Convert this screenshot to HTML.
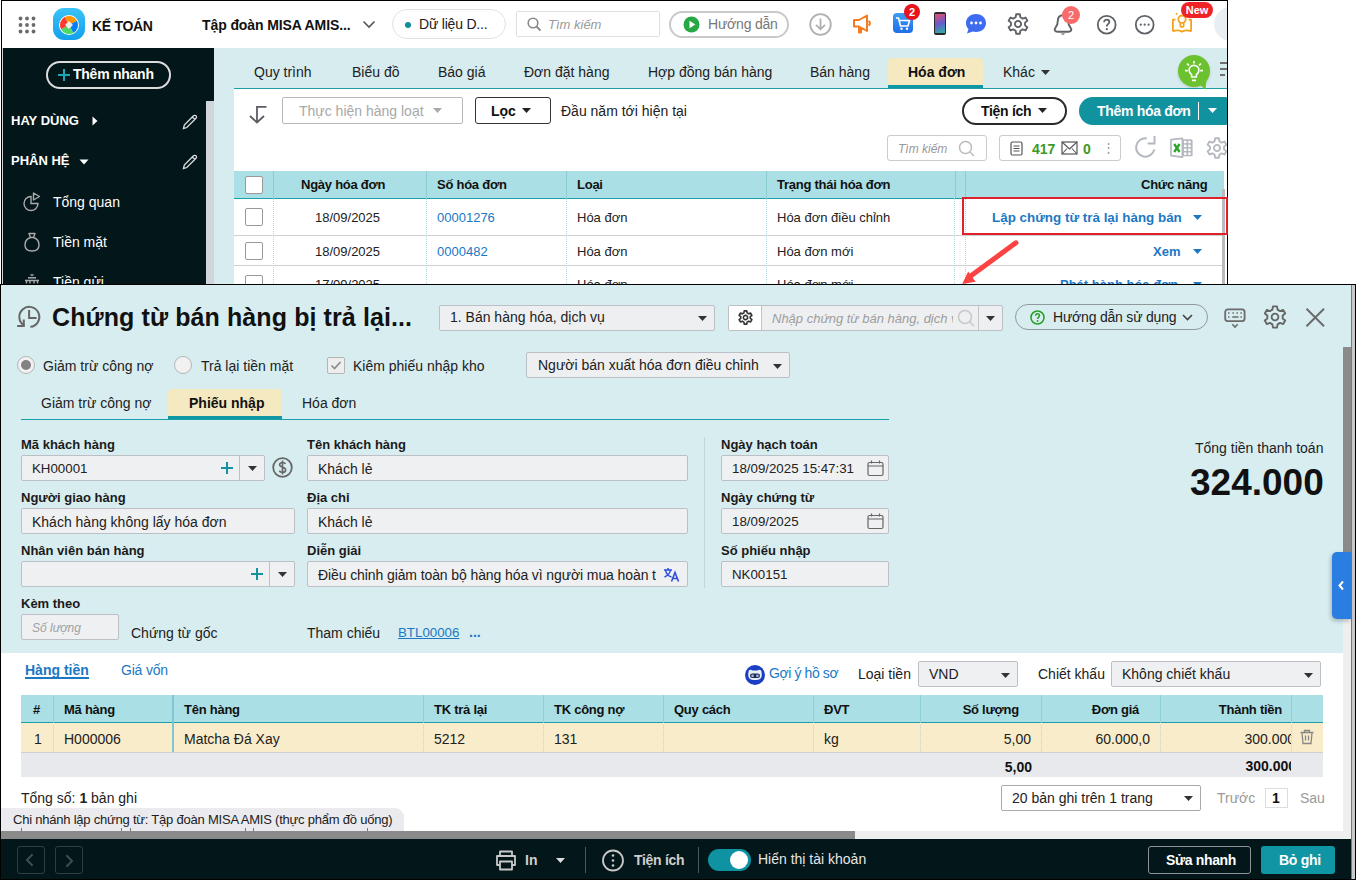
<!DOCTYPE html>
<html><head><meta charset="utf-8">
<style>
*{box-sizing:border-box;margin:0;padding:0}
html,body{width:1356px;height:880px;overflow:hidden;background:#fff;font-family:"Liberation Sans",sans-serif;color:#212121}
.a{position:absolute}
.t{position:absolute;white-space:nowrap;line-height:1}
.b{font-weight:bold}
svg{position:absolute;overflow:visible}
</style></head><body>
<!-- ========== BACKGROUND APP ========== -->
<div class="a" style="left:1px;top:0;width:1227px;height:285px;background:#000"></div>
<div class="a" style="left:1px;top:1px;width:1226px;height:283px;background:#fff;overflow:hidden" id="bg">
  <div class="a" style="left:0;top:0;width:1px;height:283px;background:#000;z-index:5"></div>
  <!-- top bar -->
  <div class="a" style="left:0;top:0;width:1225px;height:47px;background:#fff"></div>
  <!-- grid dots -->
  <svg style="left:17px;top:15px" width="18" height="18" viewBox="0 0 18 18" fill="#6b6b6b">
    <circle cx="2.5" cy="2.5" r="1.9"/><circle cx="9" cy="2.5" r="1.9"/><circle cx="15.5" cy="2.5" r="1.9"/>
    <circle cx="2.5" cy="9" r="1.9"/><circle cx="9" cy="9" r="1.9"/><circle cx="15.5" cy="9" r="1.9"/>
    <circle cx="2.5" cy="15.5" r="1.9"/><circle cx="9" cy="15.5" r="1.9"/><circle cx="15.5" cy="15.5" r="1.9"/>
  </svg>
  <!-- logo -->
  <div class="a" style="left:52px;top:7px;width:32px;height:32px;border-radius:11px;background:linear-gradient(180deg,#3ac3f7,#12a0ec)"></div>
  <svg style="left:57px;top:13px" width="22" height="22" viewBox="0 0 22 22">
    <circle cx="11" cy="11" r="10" fill="#fff"/>
    <g transform="rotate(17 11 11)"><path d="M11 11 L4.6 4.6 A9.05 9.05 0 0 1 17.4 4.6 Z" fill="#ff9500"/>
    <path d="M11 11 L17.4 4.6 A9.05 9.05 0 0 1 17.4 17.4 Z" fill="#0a7cf5"/>
    <path d="M11 11 L17.4 17.4 A9.05 9.05 0 0 1 4.6 17.4 Z" fill="#4cd964"/>
    <path d="M11 11 L4.6 17.4 A9.05 9.05 0 0 1 4.6 4.6 Z" fill="#ff3b30"/></g>
    <rect x="8.6" y="8.6" width="4.8" height="4.8" transform="rotate(45 11 11)" fill="#e9ecef" stroke="#fff" stroke-width="0.8"/>
  </svg>
  <div class="t b" style="left:91px;top:18px;font-size:14px;color:#111;letter-spacing:-0.3px">KẾ TOÁN</div>
  <div class="t b" style="left:201px;top:17px;font-size:14px;color:#111;letter-spacing:-0.1px">Tập đoàn MISA AMIS...</div>
  <svg style="left:361px;top:19px" width="14" height="9" viewBox="0 0 14 9"><path d="M1.5 1.5 L7 7 L12.5 1.5" stroke="#555" stroke-width="1.6" fill="none"/></svg>
  <div class="a" style="left:391px;top:8px;width:114px;height:30px;border:1px solid #e2e2e2;border-radius:15px"></div>
  <div class="a" style="left:404px;top:21px;width:6px;height:6px;border-radius:50%;background:#0e8f9c"></div>
  <div class="t" style="left:418px;top:16px;font-size:14px;color:#212121;letter-spacing:-0.2px">Dữ liệu D...</div>
  <div class="a" style="left:515px;top:10px;width:144px;height:26px;border:1px solid #e0e0e0;border-radius:2px"></div>
  <svg style="left:526px;top:16px" width="15" height="15" viewBox="0 0 15 15"><circle cx="6" cy="6" r="4.8" stroke="#888" stroke-width="1.6" fill="none"/><path d="M9.5 9.5 L13.5 13.5" stroke="#888" stroke-width="1.8"/></svg>
  <div class="t" style="left:547px;top:17px;font-size:13px;color:#9a9a9a;font-style:italic">Tìm kiếm</div>
  <div class="a" style="left:668px;top:10px;width:120px;height:27px;border:2px solid #c9c9c9;border-radius:14px"></div>
  <svg style="left:682px;top:15px" width="17" height="17" viewBox="0 0 17 17"><circle cx="8.5" cy="8.5" r="8" fill="#28a745"/><path d="M6.5 4.8 L12.3 8.5 L6.5 12.2 Z" fill="#fff"/></svg>
  <div class="t" style="left:707px;top:16px;font-size:14px;color:#777;letter-spacing:-0.2px">Hướng dẫn</div>
  <!-- icons -->
  <svg style="left:808px;top:12px" width="23" height="23" viewBox="0 0 23 23"><circle cx="11.5" cy="11.5" r="10.3" stroke="#b0b0b0" stroke-width="1.8" fill="none"/><path d="M11.5 5.5 V16 M7 11.8 L11.5 16.3 L16 11.8" stroke="#b0b0b0" stroke-width="1.8" fill="none"/></svg>
  <svg style="left:851px;top:13px" width="22" height="20" viewBox="0 0 22 20"><path d="M2 6 H7 L15 1.5 V17 L7 12.5 H2 Z M7 12.5 V18.5 H9 V13.5 M16.5 7 A2.5 2.5 0 0 1 16.5 11.5" stroke="#f47b20" stroke-width="2" fill="none" stroke-linejoin="round"/></svg>
  <div class="a" style="left:892px;top:12px;width:20px;height:20px;border-radius:4px;background:linear-gradient(180deg,#3f9cf5,#1f6fe8)"></div>
  <svg style="left:894px;top:15px" width="16" height="15" viewBox="0 0 16 15"><path d="M1 2 H3.5 L5.5 10 H13 L14.5 4.5 H4.5" stroke="#fff" stroke-width="1.6" fill="none"/><circle cx="6.5" cy="12.8" r="1.2" fill="#fff"/><circle cx="12" cy="12.8" r="1.2" fill="#fff"/></svg>
  <div class="a" style="left:903px;top:3px;width:16px;height:16px;border-radius:50%;background:#e8131b;color:#fff;font-size:11px;font-weight:bold;text-align:center;line-height:16px">2</div>
  <div class="a" style="left:933px;top:11px;width:12px;height:23px;border-radius:2px;background:#2a2a2a"></div>
  <div class="a" style="left:934px;top:13px;width:10px;height:19px;background:linear-gradient(160deg,#e84f6a,#6a5acd 50%,#2bb5a0)"></div>
  <svg style="left:964px;top:12px" width="22" height="21" viewBox="0 0 22 21"><path d="M11 1 C17 1 21 5 21 10 C21 15 17 19 11 19 C9.8 19 8.7 18.8 7.7 18.5 L2 20.5 L3.5 16 C1.8 14.5 1 12.4 1 10 C1 5 5 1 11 1 Z" fill="#3d6cf0"/><circle cx="6.5" cy="10" r="1.4" fill="#fff"/><circle cx="11" cy="10" r="1.4" fill="#fff"/><circle cx="15.5" cy="10" r="1.4" fill="#fff"/></svg>
  <svg style="left:1006px;top:12px" width="22" height="22" viewBox="0 0 24 24"><path d="M9.43 4.63 L9.98 1.39 L14.02 1.39 L14.57 4.63 L17.10 6.10 L20.18 4.94 L22.20 8.45 L19.66 10.54 L19.66 13.46 L22.20 15.55 L20.18 19.06 L17.10 17.90 L14.57 19.37 L14.02 22.61 L9.98 22.61 L9.43 19.37 L6.90 17.90 L3.82 19.06 L1.80 15.55 L4.34 13.46 L4.34 10.54 L1.80 8.45 L3.82 4.94 L6.90 6.10 Z M15.40 12.00 A3.40 3.40 0 1 0 8.60 12.00 A3.40 3.40 0 1 0 15.40 12.00" stroke="#5f6368" stroke-width="2.0" fill="none" stroke-linejoin="round"/></svg>
  <svg style="left:1051px;top:12px" width="22" height="23" viewBox="0 0 22 23"><path d="M11 2.2 C7.6 2.2 5.8 4.6 5.8 8 C5.8 11.3 5.3 12.7 3.4 14.9 C1.8 16.7 2.9 18.7 5.6 18.7 H16.4 C19.1 18.7 20.2 16.7 18.6 14.9 C16.7 12.7 16.2 11.3 16.2 8 C16.2 4.6 14.4 2.2 11 2.2 Z" stroke="#5f6368" stroke-width="1.9" fill="none"/><path d="M8.6 20.6 H13.4 L11 22 Z" fill="#5f6368"/></svg>
  <div class="a" style="left:1061px;top:5px;width:18px;height:18px;border-radius:50%;background:#f76b6b;color:#fff;font-size:11px;text-align:center;line-height:18px">2</div>
  <svg style="left:1095px;top:13px" width="21" height="21" viewBox="0 0 21 21"><circle cx="10.7" cy="10.7" r="8.9" stroke="#5f6368" stroke-width="1.8" fill="none"/><path d="M8 8.2 C8 6.6 9.2 5.6 10.7 5.6 C12.2 5.6 13.4 6.6 13.4 8 C13.4 9.8 10.8 10 10.8 12.5" stroke="#5f6368" stroke-width="1.8" fill="none"/><circle cx="10.8" cy="15.2" r="1.1" fill="#5f6368"/></svg>
  <svg style="left:1133px;top:13px" width="21" height="21" viewBox="0 0 21 21"><circle cx="10.7" cy="10.7" r="8.9" stroke="#5f6368" stroke-width="1.8" fill="none"/><circle cx="6.8" cy="10.7" r="1.1" fill="#5f6368"/><circle cx="10.7" cy="10.7" r="1.1" fill="#5f6368"/><circle cx="14.6" cy="10.7" r="1.1" fill="#5f6368"/></svg>
  <svg style="left:1170px;top:11px" width="24" height="22" viewBox="0 0 24 22"><path d="M4.5 7.6 H1.9 V19.6 M17.5 7.6 H20.1 V19.6 M1.9 19.6 C4.5 18 8 18 11 19.6 C14 18 17.5 18 20.1 19.6" stroke="#f5a31f" stroke-width="1.8" fill="none" stroke-linejoin="round"/><circle cx="11" cy="7.2" r="3.7" stroke="#f5a31f" stroke-width="1.8" fill="none"/><path d="M9.3 10.5 V13.2 A1.7 1.7 0 0 0 12.7 13.2 V10.5" stroke="#f5a31f" stroke-width="1.7" fill="none"/><circle cx="5.6" cy="1.8" r="1" fill="#f5a31f"/></svg>
  <div class="a" style="left:1180px;top:1px;width:32px;height:16px;border-radius:8px;background:#ef2226;color:#fff;font-size:11px;font-weight:bold;text-align:center;line-height:16px">New</div>
  <div class="a" style="left:1213px;top:6px;width:34px;height:34px;border-radius:50%;background:#e9eef3"></div>

  <!-- sidebar -->
  <div class="a" style="left:2px;top:47px;width:211px;height:240px;background:#03161a"></div>
  <div class="a" style="left:1px;top:47px;width:1px;height:240px;background:#d5d5d5"></div>
  <div class="a" style="left:205px;top:100px;width:8px;height:190px;background:#d2d5da"></div>
  <div class="a" style="left:45px;top:60px;width:125px;height:28px;border:2px solid #dcdcdc;border-radius:14px"></div>
  <svg style="left:57px;top:68px" width="12" height="12" viewBox="0 0 12 12"><path d="M6 0 V12 M0 6 H12" stroke="#18a9b5" stroke-width="2"/></svg>
  <div class="t b" style="left:72px;top:66px;font-size:14px;color:#fff;letter-spacing:-0.25px">Thêm nhanh</div>
  <div class="t b" style="left:10px;top:113px;font-size:13px;color:#fff">HAY DÙNG</div>
  <svg style="left:91px;top:115px" width="6" height="10" viewBox="0 0 6 10"><path d="M0.5 0.5 L5.5 5 L0.5 9.5 Z" fill="#fff"/></svg>
  <svg style="left:180px;top:112px" width="18" height="18" viewBox="0 0 18 18"><path d="M2.5 15.5 L3.3 12 L12.5 2.8 C13.2 2.1 14.3 2.1 15 2.8 C15.7 3.5 15.7 4.6 15 5.3 L5.8 14.5 Z M11.3 4 L13.8 6.5" stroke="#ddd" stroke-width="1.3" fill="none"/></svg>
  <div class="t b" style="left:10px;top:153px;font-size:13px;color:#fff">PHÂN HỆ</div>
  <svg style="left:78px;top:158px" width="10" height="6" viewBox="0 0 10 6"><path d="M0.5 0.5 L9.5 0.5 L5 5.5 Z" fill="#fff"/></svg>
  <svg style="left:180px;top:152px" width="18" height="18" viewBox="0 0 18 18"><path d="M2.5 15.5 L3.3 12 L12.5 2.8 C13.2 2.1 14.3 2.1 15 2.8 C15.7 3.5 15.7 4.6 15 5.3 L5.8 14.5 Z M11.3 4 L13.8 6.5" stroke="#ddd" stroke-width="1.3" fill="none"/></svg>
  <svg style="left:22px;top:191px" width="18" height="20" viewBox="0 0 18 20"><path d="M8 4.5 A7 7 0 1 0 15 11.5 H8 Z" stroke="#aaa" stroke-width="1.4" fill="none"/><path d="M10.5 1 L16.5 4.5 L10.5 8 Z" stroke="#aaa" stroke-width="1.4" fill="none" stroke-linejoin="round"/></svg>
  <div class="t" style="left:52px;top:194px;font-size:14px;color:#fff">Tổng quan</div>
  <svg style="left:23px;top:231px" width="16" height="20" viewBox="0 0 16 20"><path d="M5 1.5 H11 L9.5 5.5 C13 6.5 15 9.5 15 13 C15 17 12 19 8 19 C4 19 1 17 1 13 C1 9.5 3 6.5 6.5 5.5 Z M5.5 5.5 H10.5" stroke="#aaa" stroke-width="1.4" fill="none" stroke-linejoin="round"/></svg>
  <div class="t" style="left:52px;top:234px;font-size:14px;color:#fff">Tiền mặt</div>
  <svg style="left:23px;top:273px" width="16" height="12" viewBox="0 0 16 12"><path d="M6.5 1 H9.5 M4 3.8 H12 M1 6.5 H15 M2.5 6.5 V9.5 M6 6.5 V9.5 M10 6.5 V9.5 M13.5 6.5 V9.5" stroke="#aaa" stroke-width="1.4" fill="none"/></svg>
  <div class="t" style="left:52px;top:274px;font-size:14px;color:#fff">Tiền gửi</div>

  <!-- content area -->
  <div class="a" style="left:213px;top:47px;width:1013px;height:240px;background:#d7ecef"></div>
  <div class="a" style="left:233px;top:87px;width:993px;height:200px;background:#fff;border-top:1px solid #1a9fab"></div>
  <!-- tabs -->
  <div class="t" style="left:253px;top:64px;font-size:14px;color:#212121">Quy trình</div>
  <div class="t" style="left:351px;top:64px;font-size:14px;color:#212121">Biểu đồ</div>
  <div class="t" style="left:437px;top:64px;font-size:14px;color:#212121">Báo giá</div>
  <div class="t" style="left:523px;top:64px;font-size:14px;color:#212121">Đơn đặt hàng</div>
  <div class="t" style="left:647px;top:64px;font-size:14px;color:#212121">Hợp đồng bán hàng</div>
  <div class="t" style="left:809px;top:64px;font-size:14px;color:#212121">Bán hàng</div>
  <div class="a" style="left:887px;top:57px;width:95px;height:30px;background:#f4e9c0;border-radius:4px 4px 0 0;border-bottom:3px solid #0f97a6"></div>
  <div class="t b" style="left:907px;top:64px;font-size:14px;color:#111">Hóa đơn</div>
  <div class="t" style="left:1002px;top:64px;font-size:14px;color:#212121">Khác</div>
  <svg style="left:1040px;top:69px" width="9" height="5" viewBox="0 0 9 5"><path d="M0 0 H9 L4.5 5 Z" fill="#333"/></svg>
  <div class="a" style="left:1177px;top:54px;width:32px;height:32px;border-radius:50%;background:#6cc22e;box-shadow:0 1px 3px rgba(0,0,0,.15)"></div>
  <svg style="left:1176px;top:53px" width="34" height="38" viewBox="0 0 34 38"><path d="M22 30 L28.5 35.8 L29.5 25 Z" fill="#6cc22e"/><path d="M14.6 23 V20.6 C13 19.6 12.1 18 12.1 16.3 A4.9 4.9 0 0 1 21.9 16.3 C21.9 18 21 19.6 19.4 20.6 V23 Z" stroke="#fff" stroke-width="1.6" fill="none" stroke-linejoin="round"/><path d="M15 26.4 H19 M17 7 V9.6 M10 9.6 L12 11.4 M24 9.6 L22 11.4 M8 16.6 H10.8 M23.2 16.6 H26" stroke="#fff" stroke-width="1.6"/></svg>
  <div class="a" style="left:1219px;top:61px;width:7px;height:2px;background:#707070"></div>
  <div class="a" style="left:1219px;top:67px;width:7px;height:2px;background:#707070"></div>
  <div class="a" style="left:1219px;top:73px;width:5px;height:2px;background:#707070"></div>

  <!-- toolbar -->
  <svg style="left:245px;top:100px" width="24" height="24" viewBox="0 0 24 24"><path d="M11 5.8 H20.5 M11 5 V21 M4 15 L11 21.5 L18 15" stroke="#5a5d63" stroke-width="1.8" fill="none"/></svg>
  <div class="a" style="left:281px;top:96px;width:181px;height:27px;border:1px solid #b9b9b9;border-radius:2px"></div>
  <div class="t" style="left:298px;top:103px;font-size:14px;color:#a8a8a8">Thực hiện hàng loạt</div>
  <svg style="left:432px;top:107px" width="9" height="5" viewBox="0 0 9 5"><path d="M0 0 H9 L4.5 5 Z" fill="#aaa"/></svg>
  <div class="a" style="left:474px;top:96px;width:76px;height:27px;border:1px solid #333;border-radius:3px"></div>
  <div class="t b" style="left:490px;top:103px;font-size:14px;color:#111">Lọc</div>
  <svg style="left:521px;top:107px" width="9" height="5" viewBox="0 0 9 5"><path d="M0 0 H9 L4.5 5 Z" fill="#222"/></svg>
  <div class="t" style="left:560px;top:103px;font-size:14px;color:#212121">Đầu năm tới hiện tại</div>
  <div class="a" style="left:961px;top:96px;width:105px;height:28px;border:2px solid #2a2a2a;border-radius:14px"></div>
  <div class="t b" style="left:980px;top:103px;font-size:14px;color:#111;letter-spacing:-0.3px">Tiện ích</div>
  <svg style="left:1037px;top:107px" width="9" height="5" viewBox="0 0 9 5"><path d="M0 0 H9 L4.5 5 Z" fill="#222"/></svg>
  <div class="a" style="left:1078px;top:96px;width:160px;height:28px;background:#10929f;border-radius:14px"></div>
  <div class="t b" style="left:1096px;top:103px;font-size:14px;color:#fff;letter-spacing:-0.3px">Thêm hóa đơn</div>
  <div class="a" style="left:1197px;top:101px;width:1px;height:18px;background:#fff"></div>
  <svg style="left:1207px;top:107px" width="9" height="5" viewBox="0 0 9 5"><path d="M0 0 H9 L4.5 5 Z" fill="#fff"/></svg>
  <!-- row 2 -->
  <div class="a" style="left:886px;top:134px;width:100px;height:26px;border:1px solid #ccc;border-radius:3px"></div>
  <div class="t" style="left:897px;top:142px;font-size:12px;color:#999;font-style:italic">Tìm kiếm</div>
  <svg style="left:957px;top:139px" width="18" height="18" viewBox="0 0 18 18"><circle cx="7.5" cy="7.5" r="6" stroke="#bbb" stroke-width="1.5" fill="none"/><path d="M12 12 L16 16" stroke="#bbb" stroke-width="1.5"/></svg>
  <div class="a" style="left:998px;top:134px;width:122px;height:26px;border:1px solid #ccc;border-radius:3px"></div>
  <svg style="left:1009px;top:140px" width="13" height="15" viewBox="0 0 13 15"><rect x="1" y="1" width="11" height="13" rx="1.5" stroke="#555" stroke-width="1.2" fill="none"/><path d="M3.5 5 H9.5 M3.5 7.5 H9.5 M3.5 10 H9.5" stroke="#555" stroke-width="1.1"/></svg>
  <div class="t b" style="left:1031px;top:141px;font-size:14px;color:#3a9a2a">417</div>
  <svg style="left:1060px;top:140px" width="17" height="14" viewBox="0 0 17 14"><rect x="1" y="1" width="15" height="12" stroke="#555" stroke-width="1.2" fill="none"/><path d="M1 1 L8.5 8 L16 1 M1 13 L6 7.5 M16 13 L11 7.5" stroke="#555" stroke-width="1.1" fill="none"/></svg>
  <div class="t b" style="left:1082px;top:141px;font-size:14px;color:#3a9a2a">0</div>
  <div class="t" style="left:1101px;top:140px;font-size:13px;color:#999">⋮</div>
  <svg style="left:1133px;top:135px" width="24" height="24" viewBox="0 0 24 24"><path d="M12.8 2.4 A9.2 9.2 0 1 0 20.3 13.4" stroke="#b4b8bf" stroke-width="2" fill="none"/><path d="M20.5 0 V7.4 H13.6" stroke="#b4b8bf" stroke-width="2" fill="none"/></svg>
  <svg style="left:1169px;top:137px" width="24" height="22" viewBox="0 0 24 22"><rect x="12" y="1.2" width="10.6" height="17" rx="1.2" fill="#b4b8bf"/><rect x="14.0" y="2.8" width="2.5" height="2.4" fill="#fff"/><rect x="14.0" y="6.7" width="2.5" height="2.4" fill="#fff"/><rect x="14.0" y="10.6" width="2.5" height="2.4" fill="#fff"/><rect x="14.0" y="14.5" width="2.5" height="2.4" fill="#fff"/><rect x="18.2" y="2.8" width="2.5" height="2.4" fill="#fff"/><rect x="18.2" y="6.7" width="2.5" height="2.4" fill="#fff"/><rect x="18.2" y="10.6" width="2.5" height="2.4" fill="#fff"/><rect x="18.2" y="14.5" width="2.5" height="2.4" fill="#fff"/><path d="M1 1.6 L12.4 0.4 V19.2 L1 17.6 Z" stroke="#b4b8bf" stroke-width="1.7" fill="#fff" stroke-linejoin="round"/><path d="M4.2 6 L9.6 14 M9.6 6 L4.2 14" stroke="#2aa52a" stroke-width="2.3"/></svg>
  <svg style="left:1205px;top:136px" width="22" height="22" viewBox="0 0 24 24"><path d="M9.43 4.63 L9.98 1.39 L14.02 1.39 L14.57 4.63 L17.10 6.10 L20.18 4.94 L22.20 8.45 L19.66 10.54 L19.66 13.46 L22.20 15.55 L20.18 19.06 L17.10 17.90 L14.57 19.37 L14.02 22.61 L9.98 22.61 L9.43 19.37 L6.90 17.90 L3.82 19.06 L1.80 15.55 L4.34 13.46 L4.34 10.54 L1.80 8.45 L3.82 4.94 L6.90 6.10 Z M15.40 12.00 A3.40 3.40 0 1 0 8.60 12.00 A3.40 3.40 0 1 0 15.40 12.00" stroke="#b4b8bf" stroke-width="2.0" fill="none" stroke-linejoin="round"/></svg>

  <!-- table -->
  <div class="a" style="left:233px;top:170px;width:990px;height:28px;background:#a9dfe5;border-bottom:1px solid #1a9fab"></div>
  <div class="a" style="left:272px;top:170px;width:1px;height:27px;background:#8ccdd4"></div>
  <div class="a" style="left:425px;top:170px;width:1px;height:27px;background:#8ccdd4"></div>
  <div class="a" style="left:565px;top:170px;width:1px;height:27px;background:#8ccdd4"></div>
  <div class="a" style="left:765px;top:170px;width:1px;height:27px;background:#8ccdd4"></div>
  <div class="a" style="left:954px;top:170px;width:1px;height:27px;background:#8ccdd4"></div>
  <div class="a" style="left:964px;top:170px;width:1px;height:27px;background:#8ccdd4"></div>
  <div class="a" style="left:244px;top:175px;width:18px;height:18px;background:#fff;border:1px solid #999;border-radius:2px"></div>
  <div class="t b" style="left:300px;top:177px;font-size:13px;color:#111;letter-spacing:-0.25px">Ngày hóa đơn</div>
  <div class="t b" style="left:436px;top:177px;font-size:13px;color:#111;letter-spacing:-0.25px">Số hóa đơn</div>
  <div class="t b" style="left:576px;top:177px;font-size:13px;color:#111;letter-spacing:-0.25px">Loại</div>
  <div class="t b" style="left:776px;top:177px;font-size:13px;color:#111;letter-spacing:-0.25px">Trạng thái hóa đơn</div>
  <div class="t b" style="left:1140px;top:177px;font-size:13px;color:#111;letter-spacing:-0.25px">Chức năng</div>
  <!-- rows -->
  <div class="a" style="left:233px;top:234px;width:990px;height:1px;background:#d0d0d0"></div>
  <div class="a" style="left:233px;top:264px;width:990px;height:1px;background:#d0d0d0"></div>
  <div class="a" style="left:272px;top:197px;width:0;height:90px;border-left:1px dotted #a9d8de"></div>
  <div class="a" style="left:425px;top:197px;width:0;height:90px;border-left:1px dotted #a9d8de"></div>
  <div class="a" style="left:565px;top:197px;width:0;height:90px;border-left:1px dotted #a9d8de"></div>
  <div class="a" style="left:765px;top:197px;width:0;height:90px;border-left:1px dotted #a9d8de"></div>
  <div class="a" style="left:953px;top:197px;width:0;height:90px;border-left:1px dotted #a9d8de"></div>
  <div class="a" style="left:964px;top:197px;width:0;height:90px;border-left:1px dotted #a9d8de"></div>
  <div class="a" style="left:1221px;top:188px;width:3px;height:100px;background:#bbb"></div>
  <div class="a" style="left:244px;top:207px;width:18px;height:18px;background:#fff;border:1px solid #999;border-radius:2px"></div>
  <div class="a" style="left:244px;top:241px;width:18px;height:18px;background:#fff;border:1px solid #999;border-radius:2px"></div>
  <div class="a" style="left:244px;top:274px;width:18px;height:18px;background:#fff;border:1px solid #999;border-radius:2px"></div>
  <div class="t" style="left:314px;top:210px;font-size:13px">18/09/2025</div>
  <div class="t" style="left:436px;top:210px;font-size:13px;color:#1b78c4">00001276</div>
  <div class="t" style="left:576px;top:210px;font-size:13px">Hóa đơn</div>
  <div class="t" style="left:776px;top:210px;font-size:13px">Hóa đơn điều chỉnh</div>
  <div class="t b" style="left:991px;top:210px;font-size:13.4px;color:#1b78c4">Lập chứng từ trả lại hàng bán</div>
  <svg style="left:1192px;top:214px" width="9" height="5" viewBox="0 0 9 5"><path d="M0 0 H9 L4.5 5 Z" fill="#1b78c4"/></svg>
  <div class="t" style="left:314px;top:244px;font-size:13px">18/09/2025</div>
  <div class="t" style="left:436px;top:244px;font-size:13px;color:#1b78c4">0000482</div>
  <div class="t" style="left:576px;top:244px;font-size:13px">Hóa đơn</div>
  <div class="t" style="left:776px;top:244px;font-size:13px">Hóa đơn mới</div>
  <div class="t b" style="left:1152px;top:244px;font-size:13px;color:#1b78c4">Xem</div>
  <svg style="left:1192px;top:248px" width="9" height="5" viewBox="0 0 9 5"><path d="M0 0 H9 L4.5 5 Z" fill="#1b78c4"/></svg>
  <div class="t" style="left:314px;top:277px;font-size:13px">17/09/2025</div>
  <div class="t" style="left:576px;top:277px;font-size:13px">Hóa đơn</div>
  <div class="t" style="left:776px;top:277px;font-size:13px">Hóa đơn mới</div>
  <div class="t b" style="left:1059px;top:277px;font-size:13px;color:#1b78c4">Phát hành hóa đơn</div>
  <svg style="left:1192px;top:281px" width="9" height="5" viewBox="0 0 9 5"><path d="M0 0 H9 L4.5 5 Z" fill="#1b78c4"/></svg>
  <!-- red box & arrow -->
  
  <svg style="left:0;top:0" width="1225" height="283"><path d="M1014.9 241.8 L969 275.5" stroke="#fd4242" stroke-width="5" stroke-linecap="round"/><path d="M961.2 283 L967.2 270.6 L974.6 280.7 Z" fill="#fd4242"/></svg>
</div>
<div class="a" style="left:962px;top:197px;width:266px;height:38px;border:2px solid #e0202a;z-index:3"></div>
<!-- right white -->
<div class="a" style="left:1228px;top:0;width:128px;height:285px;background:#fff"></div>

<!-- ========== DIALOG ========== -->
<div class="a" id="dlg" style="left:0;top:284px;width:1356px;height:596px;background:#000;overflow:hidden">
 <div class="a" style="left:1px;top:1px;width:1354px;height:594px;background:#fff;overflow:hidden">
  <!-- light header area -->
  <div class="a" style="left:0;top:0;width:1350px;height:368px;background:#d8edf0"></div>
  <!-- vertical scrollbar -->
  <div class="a" style="left:1342px;top:267px;width:8px;height:287px;background:#efefef"></div>
  <div class="a" style="left:1342px;top:62px;width:8px;height:206px;background:#8a8a8a"></div>
  <div class="a" style="left:1350px;top:0;width:1px;height:595px;background:#7a7a7a"></div><div class="a" style="left:1351px;top:0;width:3px;height:595px;background:#c9c9c9"></div>
  <!-- side tab -->
  <div class="a" style="left:1331px;top:267px;width:19px;height:67px;background:#2a7de1;border-radius:5px 0 0 5px;box-shadow:-1px 2px 4px rgba(0,0,0,.25)"></div>
  <svg style="left:1336px;top:295px" width="8" height="11" viewBox="0 0 8 11"><path d="M6 1.5 L2.5 5.5 L6 9.5" stroke="#fff" stroke-width="2" fill="none"/></svg>

  <!-- title -->
  <svg style="left:16px;top:21px" width="26" height="26" viewBox="0 0 26 26"><path d="M13.35 20.85 A10 10 0 1 0 7.3 19.56" stroke="#666" stroke-width="2" fill="none"/><path d="M6.8 13.5 V20 H0.2" stroke="#666" stroke-width="2" fill="none"/><path d="M12.1 4.1 V11.9 H19.6" stroke="#666" stroke-width="2" fill="none"/></svg>
  <div class="t b" style="left:51px;top:20px;font-size:25px;color:#111;letter-spacing:0.1px">Chứng từ bán hàng bị trả lại...</div>

  <!-- type select -->
  <div class="a" style="left:438px;top:20px;width:276px;height:26px;background:#eeeff1;border:1px solid #bcc0c6;border-radius:2px"></div>
  <div class="t" style="left:449px;top:25px;font-size:14px;color:#212121">1. Bán hàng hóa, dịch vụ</div>
  <svg style="left:697px;top:31px" width="9" height="5" viewBox="0 0 9 5"><path d="M0 0 H9 L4.5 5 Z" fill="#333"/></svg>
  <div class="a" style="left:727px;top:20px;width:275px;height:26px;background:#eeeff1;border:1px solid #bcc0c6;border-radius:2px"></div>
  <div class="a" style="left:728px;top:21px;width:33px;height:24px;background:#fff;border-right:1px solid #c4c4c4"></div>
  <svg style="left:737px;top:25px" width="15" height="15" viewBox="0 0 24 24"><path d="M9.43 4.63 L9.98 1.39 L14.02 1.39 L14.57 4.63 L17.10 6.10 L20.18 4.94 L22.20 8.45 L19.66 10.54 L19.66 13.46 L22.20 15.55 L20.18 19.06 L17.10 17.90 L14.57 19.37 L14.02 22.61 L9.98 22.61 L9.43 19.37 L6.90 17.90 L3.82 19.06 L1.80 15.55 L4.34 13.46 L4.34 10.54 L1.80 8.45 L3.82 4.94 L6.90 6.10 Z M15.40 12.00 A3.40 3.40 0 1 0 8.60 12.00 A3.40 3.40 0 1 0 15.40 12.00" stroke="#333" stroke-width="2.6" fill="none" stroke-linejoin="round"/></svg>
  <div class="a" style="left:771px;top:22px;width:181px;height:22px;overflow:hidden"><div class="t" style="left:0;top:5px;font-size:13px;color:#9d9d9d;font-style:italic">Nhập chứng từ bán hàng, dịch vụ</div></div>
  <svg style="left:956px;top:24px" width="19" height="19" viewBox="0 0 19 19"><circle cx="8" cy="8" r="6.5" stroke="#c8c8c8" stroke-width="1.5" fill="none"/><path d="M12.5 12.5 L17 17" stroke="#c8c8c8" stroke-width="1.5"/></svg>
  <div class="a" style="left:977px;top:21px;width:1px;height:24px;background:#c4c4c4"></div>
  <svg style="left:985px;top:31px" width="9" height="5" viewBox="0 0 9 5"><path d="M0 0 H9 L4.5 5 Z" fill="#333"/></svg>
  <!-- guide pill -->
  <div class="a" style="left:1014px;top:19px;width:193px;height:26px;border:1px solid #8f9a9c;border-radius:13px"></div>
  <svg style="left:1029px;top:25px" width="15" height="15" viewBox="0 0 15 15"><circle cx="7.5" cy="7.5" r="6.5" stroke="#2aa02a" stroke-width="1.6" fill="none"/><path d="M5.5 5.8 C5.5 4.6 6.4 3.8 7.5 3.8 C8.6 3.8 9.5 4.6 9.5 5.7 C9.5 7.1 7.6 7.2 7.6 9" stroke="#2aa02a" stroke-width="1.5" fill="none"/><circle cx="7.6" cy="11" r="0.9" fill="#2aa02a"/></svg>
  <div class="t" style="left:1052px;top:25px;font-size:14px;color:#212121;letter-spacing:-0.2px">Hướng dẫn sử dụng</div>
  <svg style="left:1181px;top:29px" width="11" height="7" viewBox="0 0 11 7"><path d="M1 1 L5.5 5.5 L10 1" stroke="#444" stroke-width="1.6" fill="none"/></svg>
  <!-- keyboard -->
  <svg style="left:1222px;top:23px" width="25" height="22" viewBox="0 0 25 22"><rect x="2.2" y="1.3" width="19.4" height="11.8" rx="2.6" stroke="#6b6b6b" stroke-width="1.8" fill="none"/><path d="M5 5.1 H6.5 M9.4 5.1 H10.9 M13.4 5.1 H14.9 M17.4 5.1 H18.9 M5 8.9 H6.5 M9.3 8.9 H15.5 M17.4 8.9 H18.9" stroke="#6b6b6b" stroke-width="1.5"/><path d="M9.3 16.3 L12 19 L14.7 16.3" stroke="#6b6b6b" stroke-width="1.6" fill="none"/></svg>
  <!-- gear -->
  <svg style="left:1262px;top:20px" width="24" height="24" viewBox="0 0 24 24"><path d="M9.43 4.63 L9.98 1.39 L14.02 1.39 L14.57 4.63 L17.10 6.10 L20.18 4.94 L22.20 8.45 L19.66 10.54 L19.66 13.46 L22.20 15.55 L20.18 19.06 L17.10 17.90 L14.57 19.37 L14.02 22.61 L9.98 22.61 L9.43 19.37 L6.90 17.90 L3.82 19.06 L1.80 15.55 L4.34 13.46 L4.34 10.54 L1.80 8.45 L3.82 4.94 L6.90 6.10 Z M15.40 12.00 A3.40 3.40 0 1 0 8.60 12.00 A3.40 3.40 0 1 0 15.40 12.00" stroke="#666" stroke-width="1.9" fill="none" stroke-linejoin="round"/></svg>
  <!-- close -->
  <svg style="left:1304px;top:22px" width="21" height="21" viewBox="0 0 21 21"><path d="M1.5 1.8 L19 19.2 M19 1.8 L1.5 19.2" stroke="#6b6b6b" stroke-width="2"/></svg>

  <!-- radios -->
  <div class="a" style="left:16px;top:71px;width:18px;height:18px;border-radius:50%;border:1px solid #b5b5b5;background:#f1f1f1"></div>
  <div class="a" style="left:20px;top:75px;width:10px;height:10px;border-radius:50%;background:#828282"></div>
  <div class="t" style="left:42px;top:74px;font-size:14px;color:#212121">Giảm trừ công nợ</div>
  <div class="a" style="left:173px;top:71px;width:18px;height:18px;border-radius:50%;border:1px solid #b5b5b5;background:#f1f1f1"></div>
  <div class="t" style="left:200px;top:74px;font-size:14px;color:#212121">Trả lại tiền mặt</div>
  <div class="a" style="left:326px;top:72px;width:18px;height:17px;border:1px solid #b5b5b5;background:#eee;border-radius:2px"></div>
  <svg style="left:329px;top:75px" width="12" height="11" viewBox="0 0 12 11"><path d="M1.5 5.5 L4.5 8.5 L10.5 2" stroke="#888" stroke-width="1.6" fill="none"/></svg>
  <div class="t" style="left:352px;top:74px;font-size:14px;color:#212121">Kiêm phiếu nhập kho</div>
  <div class="a" style="left:525px;top:67px;width:264px;height:26px;background:#eeeff1;border:1px solid #bcc0c6;border-radius:2px"></div>
  <div class="t" style="left:537px;top:73px;font-size:14px;color:#212121">Người bán xuất hóa đơn điều chỉnh</div>
  <svg style="left:772px;top:79px" width="9" height="5" viewBox="0 0 9 5"><path d="M0 0 H9 L4.5 5 Z" fill="#333"/></svg>

  <!-- sub tabs -->
  <div class="a" style="left:20px;top:134px;width:868px;height:1px;background:#1a9fab"></div>
  <div class="t" style="left:40px;top:111px;font-size:14px;color:#212121">Giảm trừ công nợ</div>
  <div class="a" style="left:167px;top:104px;width:114px;height:30px;background:#f4e9c0;border-radius:4px 4px 0 0;border-bottom:3px solid #0f97a6"></div>
  <div class="t b" style="left:188px;top:111px;font-size:14px;color:#111">Phiếu nhập</div>
  <div class="t" style="left:301px;top:111px;font-size:14px;color:#212121">Hóa đơn</div>

  <!-- form col1 -->
  <div class="t b" style="left:20px;top:153px;font-size:13px;color:#1a1a1a">Mã khách hàng</div>
  <div class="a" style="left:20px;top:170px;width:244px;height:26px;background:#eff0f2;border:1px solid #bcc0c6;border-radius:2px"></div>
  <div class="t" style="left:31px;top:177px;font-size:13.3px;color:#212121">KH00001</div>
  <svg style="left:219px;top:176px" width="14" height="14" viewBox="0 0 14 14"><path d="M7 1 V13 M1 7 H13" stroke="#1592a1" stroke-width="2"/></svg>
  <div class="a" style="left:238px;top:171px;width:1px;height:24px;background:#bcc0c6"></div>
  <svg style="left:247px;top:181px" width="9" height="5" viewBox="0 0 9 5"><path d="M0 0 H9 L4.5 5 Z" fill="#333"/></svg>
  <svg style="left:271px;top:172px" width="21" height="21" viewBox="0 0 21 21"><circle cx="10.5" cy="10.5" r="9.3" stroke="#666" stroke-width="1.8" fill="none"/><path d="M13.5 7 C13 6 12 5.5 10.5 5.5 C8.8 5.5 7.6 6.4 7.6 7.7 C7.6 10.6 13.6 9.6 13.6 12.9 C13.6 14.3 12.3 15.3 10.5 15.3 C8.9 15.3 7.8 14.7 7.3 13.6 M10.5 3.5 V17.5" stroke="#666" stroke-width="1.6" fill="none"/></svg>
  <div class="t b" style="left:20px;top:206px;font-size:13px;color:#1a1a1a">Người giao hàng</div>
  <div class="a" style="left:20px;top:223px;width:274px;height:26px;background:#eff0f2;border:1px solid #bcc0c6;border-radius:2px"></div>
  <div class="t" style="left:31px;top:230px;font-size:14px;color:#212121">Khách hàng không lấy hóa đơn</div>
  <div class="t b" style="left:20px;top:259px;font-size:13px;color:#1a1a1a">Nhân viên bán hàng</div>
  <div class="a" style="left:20px;top:276px;width:274px;height:26px;background:#eff0f2;border:1px solid #bcc0c6;border-radius:2px"></div>
  <svg style="left:249px;top:282px" width="14" height="14" viewBox="0 0 14 14"><path d="M7 1 V13 M1 7 H13" stroke="#1592a1" stroke-width="2"/></svg>
  <div class="a" style="left:268px;top:277px;width:1px;height:24px;background:#bcc0c6"></div>
  <svg style="left:277px;top:287px" width="9" height="5" viewBox="0 0 9 5"><path d="M0 0 H9 L4.5 5 Z" fill="#333"/></svg>
  <div class="t b" style="left:20px;top:312px;font-size:13px;color:#1a1a1a">Kèm theo</div>
  <div class="a" style="left:20px;top:329px;width:98px;height:26px;background:#eff0f2;border:1px solid #bcc0c6;border-radius:2px"></div>
  <div class="t" style="left:31px;top:337px;font-size:12px;color:#a0a0a0;font-style:italic">Số lượng</div>
  <div class="t" style="left:130px;top:341px;font-size:14px;color:#212121">Chứng từ gốc</div>

  <!-- form col2 -->
  <div class="t b" style="left:306px;top:153px;font-size:13px;color:#1a1a1a">Tên khách hàng</div>
  <div class="a" style="left:306px;top:170px;width:381px;height:26px;background:#eff0f2;border:1px solid #bcc0c6;border-radius:2px"></div>
  <div class="t" style="left:317px;top:177px;font-size:14px;color:#212121">Khách lẻ</div>
  <div class="t b" style="left:306px;top:206px;font-size:13px;color:#1a1a1a">Địa chỉ</div>
  <div class="a" style="left:306px;top:223px;width:381px;height:26px;background:#eff0f2;border:1px solid #bcc0c6;border-radius:2px"></div>
  <div class="t" style="left:317px;top:230px;font-size:14px;color:#212121">Khách lẻ</div>
  <div class="t b" style="left:306px;top:259px;font-size:13px;color:#1a1a1a">Diễn giải</div>
  <div class="a" style="left:306px;top:276px;width:381px;height:26px;background:#eff0f2;border:1px solid #bcc0c6;border-radius:2px"></div>
  <div class="a" style="left:317px;top:280px;width:338px;height:19px;overflow:hidden"><div class="t" style="left:0;top:3px;font-size:14px;color:#212121;letter-spacing:-0.1px">Điều chỉnh giảm toàn bộ hàng hóa vì người mua hoàn trả</div></div>
  <svg style="left:662px;top:282px" width="17" height="15" viewBox="0 0 17 15"><path d="M1 3 H9 M5 1 V3 M2.5 3 C3 6.5 5.5 9 8.5 10 M7.5 3 C7 6 5 8.5 1.5 10" stroke="#2b4fd9" stroke-width="1.5" fill="none"/><path d="M8.5 14.5 L12 5.5 L15.5 14.5 M9.7 11.5 H14.3" stroke="#2b4fd9" stroke-width="1.6" fill="none"/></svg>
  <div class="t" style="left:306px;top:341px;font-size:14px;color:#212121">Tham chiếu</div>
  <div class="t" style="left:397px;top:341px;font-size:13.3px;color:#1b78c4;text-decoration:underline">BTL00006</div>
  <div class="t b" style="left:468px;top:340px;font-size:14px;color:#1b78c4">...</div>

  <!-- divider -->
  <div class="a" style="left:703px;top:152px;width:1px;height:151px;background:#c3d6d9"></div>
  <!-- form col3 -->
  <div class="t b" style="left:720px;top:153px;font-size:13px;color:#1a1a1a">Ngày hạch toán</div>
  <div class="a" style="left:720px;top:170px;width:168px;height:26px;background:#eff0f2;border:1px solid #bcc0c6;border-radius:2px"></div>
  <div class="t" style="left:731px;top:177px;font-size:13.3px;color:#212121">18/09/2025 15:47:31</div>
  <svg style="left:866px;top:175px" width="17" height="17" viewBox="0 0 17 17"><rect x="1" y="2.5" width="15" height="13" rx="1.5" stroke="#666" stroke-width="1.2" fill="none"/><path d="M1 6 H16 M4.5 0.5 V3.5 M12.5 0.5 V3.5" stroke="#666" stroke-width="1.2"/></svg>
  <div class="t b" style="left:720px;top:206px;font-size:13px;color:#1a1a1a">Ngày chứng từ</div>
  <div class="a" style="left:720px;top:223px;width:168px;height:26px;background:#eff0f2;border:1px solid #bcc0c6;border-radius:2px"></div>
  <div class="t" style="left:731px;top:230px;font-size:13.3px;color:#212121">18/09/2025</div>
  <svg style="left:866px;top:228px" width="17" height="17" viewBox="0 0 17 17"><rect x="1" y="2.5" width="15" height="13" rx="1.5" stroke="#666" stroke-width="1.2" fill="none"/><path d="M1 6 H16 M4.5 0.5 V3.5 M12.5 0.5 V3.5" stroke="#666" stroke-width="1.2"/></svg>
  <div class="t b" style="left:720px;top:259px;font-size:13px;color:#1a1a1a">Số phiếu nhập</div>
  <div class="a" style="left:720px;top:276px;width:168px;height:26px;background:#eff0f2;border:1px solid #bcc0c6;border-radius:2px"></div>
  <div class="t" style="left:731px;top:283px;font-size:13.3px;color:#212121">NK00151</div>

  <!-- total -->
  <div class="t" style="left:1194px;top:156px;font-size:14px;color:#212121">Tổng tiền thanh toán</div>
  <div class="t b" style="left:1189px;top:179px;font-size:37px;color:#111">324.000</div>

  <!-- detail tabs -->
  <div class="t b" style="left:24px;top:378px;font-size:14px;color:#1b78c4">Hàng tiền</div>
  <div class="a" style="left:24px;top:392px;width:64px;height:2px;background:#1b78c4"></div>
  <div class="t" style="left:120px;top:378px;font-size:14px;color:#1b78c4;letter-spacing:-0.2px">Giá vốn</div>
  <div class="a" style="left:744px;top:380px;width:20px;height:20px;border-radius:50%;background:#1a3fc4"></div>
  <svg style="left:745px;top:381px" width="18" height="18" viewBox="0 0 18 18"><path d="M2.5 6 C2.5 3.5 5 3 6.5 4.5 H11.5 C13 3 15.5 3.5 15.5 6 C16 8 16 11 14.5 12.5 C12.5 14.5 5.5 14.5 3.5 12.5 C2 11 2 8 2.5 6 Z" fill="#e8eef8"/><rect x="4" y="7.5" width="10" height="4.6" rx="2.3" fill="#1c2a55"/><circle cx="6.6" cy="9.8" r="1.4" fill="#9fb2d8"/><circle cx="11.4" cy="9.8" r="1.4" fill="#9fb2d8"/></svg>
  <div class="t" style="left:768px;top:381px;font-size:14px;color:#1b78c4;letter-spacing:-0.4px">Gợi ý hồ sơ</div>
  <div class="t" style="left:857px;top:382px;font-size:14px;color:#212121">Loại tiền</div>
  <div class="a" style="left:917px;top:376px;width:100px;height:26px;background:#eff0f2;border:1px solid #bcc0c6;border-radius:2px"></div>
  <div class="t" style="left:928px;top:382px;font-size:14px;color:#212121">VND</div>
  <svg style="left:1000px;top:388px" width="9" height="5" viewBox="0 0 9 5"><path d="M0 0 H9 L4.5 5 Z" fill="#333"/></svg>
  <div class="t" style="left:1037px;top:382px;font-size:14px;color:#212121">Chiết khấu</div>
  <div class="a" style="left:1110px;top:376px;width:210px;height:26px;background:#eff0f2;border:1px solid #bcc0c6;border-radius:2px"></div>
  <div class="t" style="left:1121px;top:382px;font-size:14px;color:#212121">Không chiết khấu</div>
  <svg style="left:1303px;top:388px" width="9" height="5" viewBox="0 0 9 5"><path d="M0 0 H9 L4.5 5 Z" fill="#333"/></svg>

  <!-- detail table -->
  <div class="a" style="left:20px;top:410px;width:1302px;height:28px;background:#a9dfe5;border-bottom:1px solid #1a9fab"></div>
  <div class="a" style="left:20px;top:438px;width:1302px;height:30px;background:#f9ecca;border-bottom:1px solid #cfcfcf"></div>
  <div class="a" style="left:20px;top:468px;width:1302px;height:24px;background:#e8e9ed"></div>
  <div class="hd">
  <div class="a" style="left:52px;top:410px;width:1px;height:28px;background:#8fd0d7"></div>
  <div class="a" style="left:171px;top:410px;width:2px;height:57px;background:#7fc7cf"></div>
  <div class="a" style="left:422px;top:410px;width:1px;height:28px;background:#8fd0d7"></div>
  <div class="a" style="left:542px;top:410px;width:1px;height:28px;background:#8fd0d7"></div>
  <div class="a" style="left:662px;top:410px;width:1px;height:28px;background:#8fd0d7"></div>
  <div class="a" style="left:812px;top:410px;width:1px;height:28px;background:#8fd0d7"></div>
  <div class="a" style="left:919px;top:410px;width:1px;height:28px;background:#8fd0d7"></div>
  <div class="a" style="left:1040px;top:410px;width:1px;height:28px;background:#8fd0d7"></div>
  <div class="a" style="left:1159px;top:410px;width:1px;height:28px;background:#8fd0d7"></div>
  <div class="a" style="left:1290px;top:410px;width:1px;height:28px;background:#8fd0d7"></div>
  </div>
  <div class="a" style="left:52px;top:440px;width:0;height:27px;border-left:1px dotted #b9d9d5"></div>
  <div class="a" style="left:422px;top:440px;width:0;height:27px;border-left:1px dotted #b9d9d5"></div>
  <div class="a" style="left:542px;top:440px;width:0;height:27px;border-left:1px dotted #b9d9d5"></div>
  <div class="a" style="left:662px;top:440px;width:0;height:27px;border-left:1px dotted #b9d9d5"></div>
  <div class="a" style="left:812px;top:440px;width:0;height:27px;border-left:1px dotted #b9d9d5"></div>
  <div class="a" style="left:919px;top:440px;width:0;height:27px;border-left:1px dotted #b9d9d5"></div>
  <div class="a" style="left:1040px;top:440px;width:0;height:27px;border-left:1px dotted #b9d9d5"></div>
  <div class="a" style="left:1159px;top:440px;width:0;height:27px;border-left:1px dotted #b9d9d5"></div>
  <div class="a" style="left:1290px;top:440px;width:0;height:27px;border-left:1px dotted #b9d9d5"></div>
  <div class="t b" style="left:32px;top:418px;font-size:13px;color:#111;letter-spacing:-0.25px">#</div>
  <div class="t b" style="left:63px;top:418px;font-size:13px;color:#111;letter-spacing:-0.25px">Mã hàng</div>
  <div class="t b" style="left:183px;top:418px;font-size:13px;color:#111;letter-spacing:-0.25px">Tên hàng</div>
  <div class="t b" style="left:433px;top:418px;font-size:13px;color:#111;letter-spacing:-0.25px">TK trả lại</div>
  <div class="t b" style="left:553px;top:418px;font-size:13px;color:#111;letter-spacing:-0.25px">TK công nợ</div>
  <div class="t b" style="left:673px;top:418px;font-size:13px;color:#111;letter-spacing:-0.25px">Quy cách</div>
  <div class="t b" style="left:823px;top:418px;font-size:13px;color:#111;letter-spacing:-0.25px">ĐVT</div>
  <div class="t b" style="left:940px;top:418px;width:78px;text-align:right;font-size:13px;color:#111;letter-spacing:-0.25px">Số lượng</div>
  <div class="t b" style="left:1060px;top:418px;width:78px;text-align:right;font-size:13px;color:#111;letter-spacing:-0.25px">Đơn giá</div>
  <div class="t b" style="left:1180px;top:418px;width:101px;text-align:right;font-size:13px;color:#111;letter-spacing:-0.25px">Thành tiền</div>
  <div class="t" style="left:33px;top:447px;font-size:14px;color:#212121">1</div>
  <div class="t" style="left:63px;top:447px;font-size:14px;color:#212121">H000006</div>
  <div class="t" style="left:183px;top:447px;font-size:14px;color:#212121">Matcha Đá Xay</div>
  <div class="t" style="left:433px;top:447px;font-size:14px;color:#212121">5212</div>
  <div class="t" style="left:553px;top:447px;font-size:14px;color:#212121">131</div>
  <div class="t" style="left:823px;top:447px;font-size:14px;color:#212121">kg</div>
  <div class="t" style="left:940px;top:447px;width:90px;text-align:right;font-size:14px;color:#212121">5,00</div>
  <div class="t" style="left:1060px;top:447px;width:89px;text-align:right;font-size:14px;color:#212121">60.000,0</div>
  <div class="a" style="left:1160px;top:440px;width:130px;height:26px;overflow:hidden"><div class="t" style="right:-4px;top:7px;font-size:14px;color:#212121">300.000</div></div>
  <svg style="left:1298px;top:444px" width="16" height="16" viewBox="0 0 16 16"><path d="M1.5 3.5 H14.5 M5.5 3.5 V1.5 H10.5 V3.5 M3 3.5 L4 14.5 H12 L13 3.5 M6.5 6.5 V11.5 M9.5 6.5 V11.5" stroke="#888" stroke-width="1.3" fill="none"/></svg>
  <div class="t b" style="left:940px;top:475px;width:91px;text-align:right;font-size:14px;color:#111">5,00</div>
  <div class="a" style="left:1160px;top:468px;width:130px;height:24px;overflow:hidden"><div class="t b" style="right:-5px;top:6px;font-size:14px;color:#111">300.000</div></div>

  <!-- footer of grid -->
  <div class="t" style="left:20px;top:506px;font-size:14px;color:#212121">Tổng số: <b>1</b> bản ghi</div>
  <div class="a" style="left:1000px;top:500px;width:200px;height:26px;background:#fff;border:1px solid #aaa;border-radius:2px"></div>
  <div class="t" style="left:1011px;top:506px;font-size:14px;color:#212121">20 bản ghi trên 1 trang</div>
  <svg style="left:1183px;top:511px" width="9" height="5" viewBox="0 0 9 5"><path d="M0 0 H9 L4.5 5 Z" fill="#333"/></svg>
  <div class="t" style="left:1216px;top:506px;font-size:14px;color:#9a9a9a">Trước</div>
  <div class="a" style="left:1264px;top:503px;width:23px;height:20px;background:#fff;border:1px solid #ddd"></div>
  <div class="t b" style="left:1271px;top:506px;font-size:14px;color:#111">1</div>
  <div class="t" style="left:1299px;top:506px;font-size:14px;color:#9a9a9a">Sau</div>

  <!-- branch tab -->
  <div class="a" style="left:0;top:523px;width:403px;height:23px;background:#ebebef;border-radius:0 9px 0 0"></div>
  <div class="t" style="left:12px;top:528px;font-size:13px;color:#212121;letter-spacing:-0.22px">Chi nhánh lập chứng từ: Tập đoàn MISA AMIS (thực phẩm đồ uống)</div>
<div class="a" style="left:20px;top:543px;width:1px;height:3px;background:#777"></div><div class="a" style="left:120px;top:543px;width:1px;height:3px;background:#777"></div><div class="a" style="left:129px;top:543px;width:1px;height:3px;background:#777"></div><div class="a" style="left:244px;top:543px;width:1px;height:3px;background:#777"></div><div class="a" style="left:252px;top:543px;width:1px;height:3px;background:#777"></div><div class="a" style="left:366px;top:543px;width:1px;height:3px;background:#777"></div>
  <!-- horizontal scrollbar -->
  <div class="a" style="left:0;top:546px;width:1342px;height:8px;background:#efefef"></div>
  <div class="a" style="left:0;top:546px;width:854px;height:8px;background:#8a8a8a"></div>

  <!-- bottom bar -->
  <div class="a" style="left:0;top:554px;width:1350px;height:41px;background:#03161a"></div>
  <div class="a" style="left:16px;top:561px;width:28px;height:28px;border:1px solid #2f3e42;border-radius:3px"></div>
  <svg style="left:24px;top:568px" width="10" height="14" viewBox="0 0 10 14"><path d="M7.6 1.2 L2 7 L7.6 12.8" stroke="#3e4e52" stroke-width="2" fill="none"/></svg>
  <div class="a" style="left:54px;top:561px;width:28px;height:28px;border:1px solid #2f3e42;border-radius:3px"></div>
  <svg style="left:63px;top:569px" width="10" height="14" viewBox="0 0 10 14"><path d="M2.4 1.2 L8 7 L2.4 12.8" stroke="#3e4e52" stroke-width="2" fill="none"/></svg>
  <svg style="left:494px;top:565px" width="22" height="21" viewBox="0 0 22 21"><path d="M5 6 V1.5 H17 V6 M5 15 H2 V6 H20 V15 H17 M5 11.5 H17 V19.5 H5 Z" stroke="#c9c9c9" stroke-width="1.8" fill="none" stroke-linejoin="round"/></svg>
  <div class="t b" style="left:524px;top:568px;font-size:14px;color:#cfcfcf">In</div>
  <svg style="left:555px;top:573px" width="9" height="5" viewBox="0 0 9 5"><path d="M0 0 H9 L4.5 5 Z" fill="#ddd"/></svg>
  <div class="a" style="left:584px;top:562px;width:1px;height:26px;background:#4a585b"></div>
  <svg style="left:600px;top:564px" width="24" height="23" viewBox="0 0 24 23"><circle cx="12" cy="11.5" r="10" stroke="#c9c9c9" stroke-width="1.8" fill="none"/><circle cx="12" cy="6.5" r="1.3" fill="#c9c9c9"/><circle cx="12" cy="11.5" r="1.3" fill="#c9c9c9"/><circle cx="12" cy="16.5" r="1.3" fill="#c9c9c9"/></svg>
  <div class="t b" style="left:633px;top:568px;font-size:14px;color:#cfcfcf;letter-spacing:-0.3px">Tiện ích</div>
  <div class="a" style="left:697px;top:562px;width:1px;height:26px;background:#4a585b"></div>
  <div class="a" style="left:707px;top:564px;width:43px;height:22px;border-radius:11px;background:#0f93a2"></div>
  <div class="a" style="left:729px;top:566px;width:18px;height:18px;border-radius:50%;background:#fff"></div>
  <div class="t" style="left:757px;top:567px;font-size:14px;color:#e6e6e6">Hiển thị tài khoản</div>
  <div class="a" style="left:1147px;top:561px;width:103px;height:28px;border:1px solid #8a9396;border-radius:3px"></div>
  <div class="t b" style="left:1165px;top:568px;font-size:14px;color:#fff;letter-spacing:-0.35px">Sửa nhanh</div>
  <div class="a" style="left:1260px;top:561px;width:74px;height:28px;background:#0f95a3;border-radius:3px"></div>
  <div class="t b" style="left:1278px;top:568px;font-size:14px;color:#fff;letter-spacing:-0.3px">Bỏ ghi</div>
  <div class="a" style="left:1350px;top:554px;width:1px;height:41px;background:#7a7a7a"></div><div class="a" style="left:1351px;top:554px;width:3px;height:41px;background:#c9c9c9"></div>
 </div>
</div>
</body></html>
